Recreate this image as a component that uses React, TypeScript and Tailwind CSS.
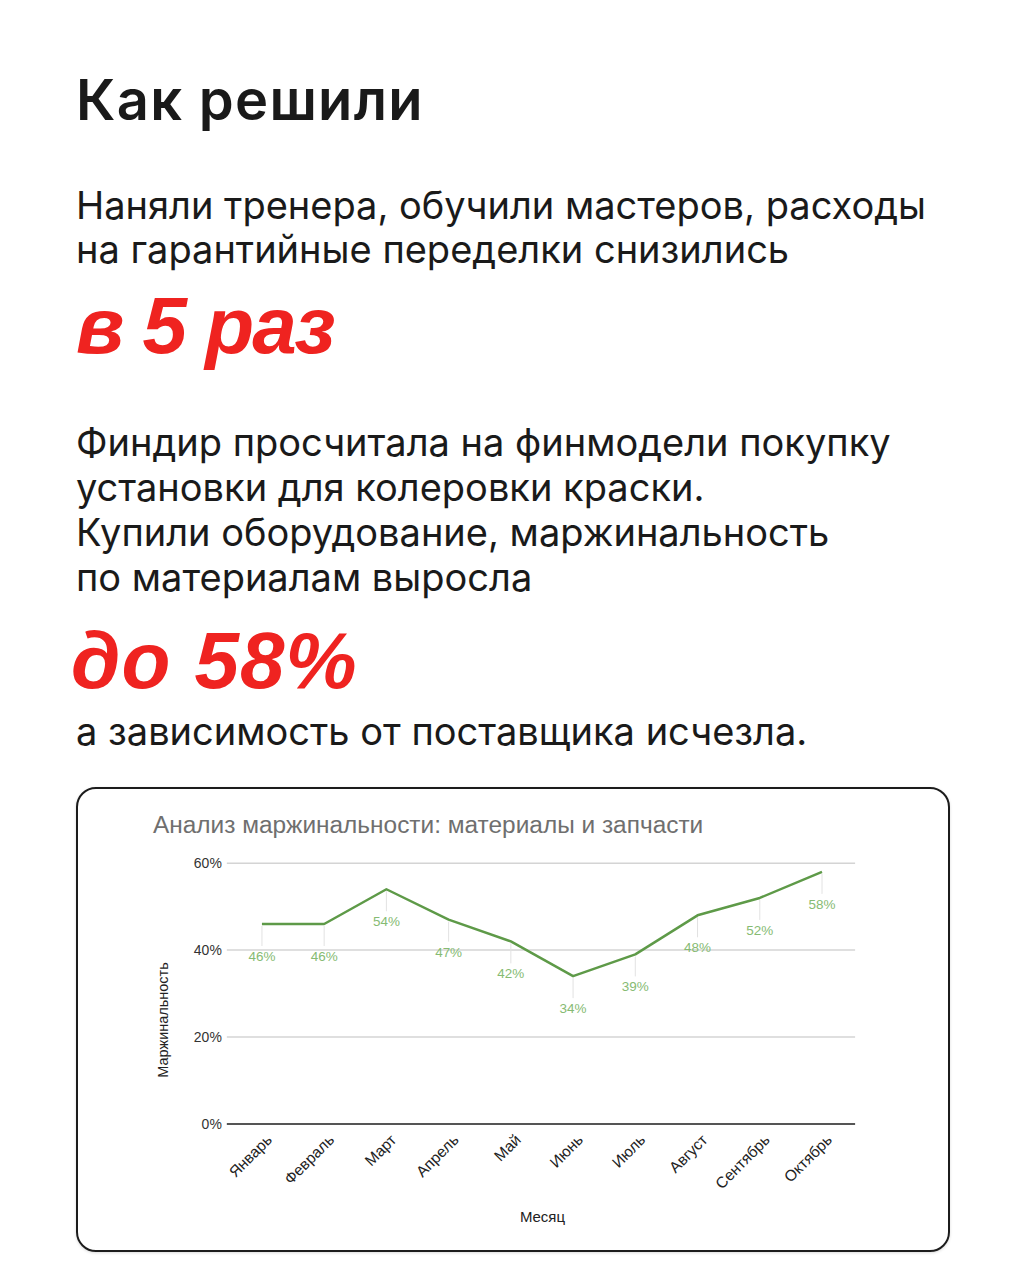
import React from 'react';

const months = ['Январь', 'Февраль', 'Март', 'Апрель', 'Май', 'Июнь', 'Июль', 'Август', 'Сентябрь', 'Октябрь'];
const values = [46, 46, 54, 47, 42, 34, 39, 48, 52, 58];

// chart geometry in page coordinates (viewBox matches the card's inner box)
const x0 = 230;
const step = 62.3;
const yZero = 1126;
const perPct = (1126 - 865) / 60;

const px = (i: number) => x0 + step / 2 + i * step;
const py = (v: number) => yZero - v * perPct;

function MarginChart() {
  const points = values.map((v, i) => `${px(i)},${py(v)}`).join(' ');
  const grid = [60, 40, 20];
  return (
    <svg viewBox="77 791 871 461" className="block w-full h-full" style={{ fontFamily: '"Liberation Sans", Arial, sans-serif' }}>
      <text x={152} y={835} fontSize={24} fill="#6f6f6f" textLength={551} lengthAdjust="spacingAndGlyphs">
        Анализ маржинальности: материалы и запчасти
      </text>

      {grid.map((g) => (
        <g key={g}>
          <line x1={226} x2={855} y1={py(g)} y2={py(g)} stroke="#d4d4d4" strokeWidth={1.5} />
          <text x={221} y={py(g) + 5} fontSize={14} fill="#333" textAnchor="end">
            {g}%
          </text>
        </g>
      ))}
      <line x1={226} x2={855} y1={yZero} y2={yZero} stroke="#555" strokeWidth={2} />
      <text x={221} y={yZero + 5} fontSize={14} fill="#333" textAnchor="end">
        0%
      </text>

      {values.map((v, i) => (
        <line key={`s${i}`} x1={px(i)} x2={px(i)} y1={py(v) + 2} y2={py(v) + 22} stroke="#e2e2e2" strokeWidth={1} />
      ))}

      <polyline points={points} fill="none" stroke="#5e9a48" strokeWidth={2.5} strokeLinejoin="round" />

      {values.map((v, i) => (
        <text key={`l${i}`} x={px(i)} y={py(v) + 37} fontSize={13.5} fill="#86bb73" textAnchor="middle">
          {v}%
        </text>
      ))}

      {months.map((m, i) => (
        <text
          key={m}
          x={px(i) + 11}
          y={1143}
          fontSize={15.5}
          fill="#222"
          textAnchor="end"
          transform={`rotate(-45 ${px(i) + 11} 1143)`}
        >
          {m}
        </text>
      ))}

      <text x={542} y={1224} fontSize={15} fill="#222" textAnchor="middle">
        Месяц
      </text>
      <text x={0} y={0} fontSize={14.5} fill="#222" textAnchor="middle" transform="translate(167 1022) rotate(-90)">
        Маржинальность
      </text>
    </svg>
  );
}

export default function App() {
  return (
    <div className="w-[1024px] min-h-[1280px] bg-white text-[#1a1a1a] font-['Inter',sans-serif]">
      <div className="pl-[76px] pr-[74px] pt-[67px] pb-[26px]">
        <h1 className="text-[56px] leading-[66px] font-semibold tracking-[1.3px]">Как решили</h1>

        <p className="mt-[50px] text-[38px] leading-[44px]">
          Наняли тренера, обучили мастеров, расходы
          <br />
          на гарантийные переделки снизились
        </p>
        <div className="mt-[9px] text-[80px] leading-[92px] font-bold italic tracking-[-2px] text-[#ef2320] font-['Liberation_Sans',Arial,sans-serif]">
          в 5 раз
        </div>

        <p className="mt-[48px] text-[38px] leading-[45px]">
          Финдир просчитала на финмодели покупку
          <br />
          установки для колеровки краски.
          <br />
          Купили оборудование, маржинальность
          <br />
          по материалам выросла
        </p>
        <div className="mt-[15px] -ml-[5px] text-[80px] leading-[92px] font-bold italic tracking-[1px] text-[#ef2320] font-['Liberation_Sans',Arial,sans-serif]">
          до 58%
        </div>
        <p className="mt-[0px] text-[38px] leading-[48px]">а зависимость от поставщика исчезла.</p>

        <div className="mt-[32px] h-[465px] rounded-[20px] border-2 border-[#1c1c1c] overflow-hidden shadow-[0_1px_3px_rgba(0,0,0,0.15)]">
          <MarginChart />
        </div>
      </div>
    </div>
  );
}
